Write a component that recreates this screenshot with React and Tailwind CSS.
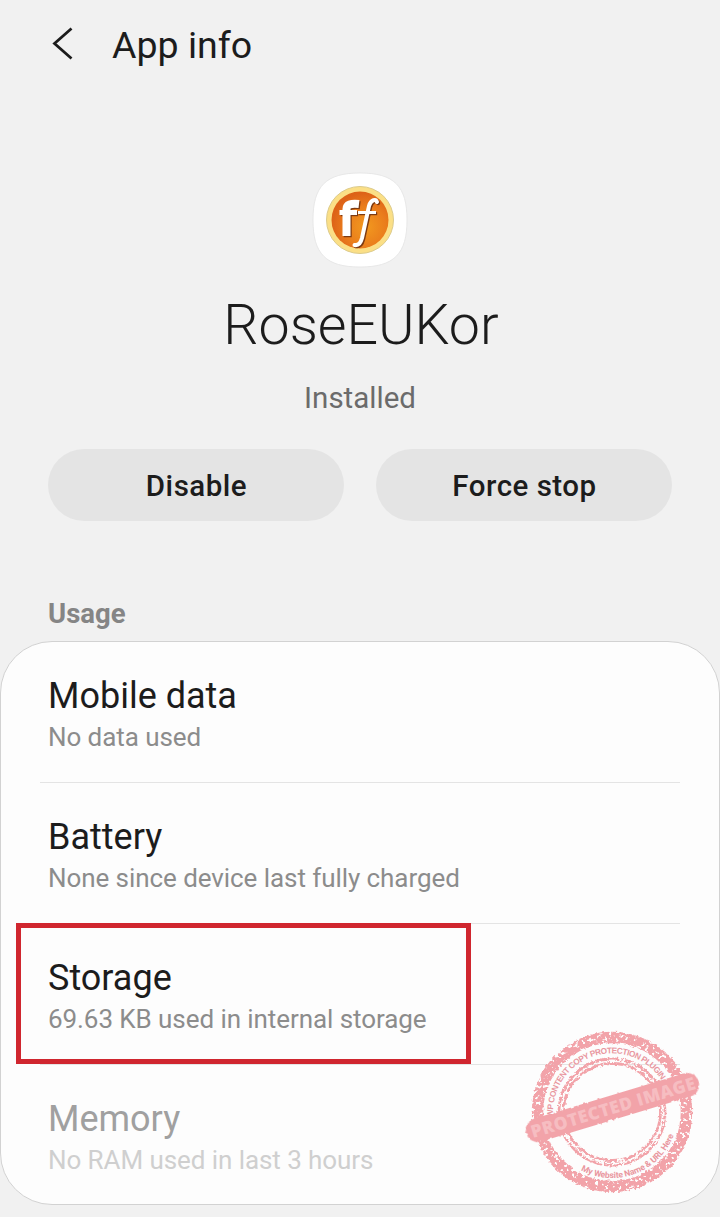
import React from 'react';

const usageItems = [
    { title: 'Mobile data', summary: 'No data used' },
    { title: 'Battery', summary: 'None since device last fully charged' },
    { title: 'Storage', summary: '69.63 KB used in internal storage', highlighted: true },
    { title: 'Memory', summary: 'No RAM used in last 3 hours', disabled: true },
];

const BackIcon = () => (
    <svg width="24" height="36" viewBox="0 0 24 36" fill="none" stroke="#1c1c1c" strokeWidth="2.8">
        <path d="M20.5 1.5L3.5 16.5L20.5 31.5" />
    </svg>
);

const AppIcon = () => (
    <svg width="96" height="96" viewBox="0 0 96 96">
        <defs>
            <radialGradient id="orange" cx="60%" cy="62%" r="60%">
                <stop offset="0" stopColor="#f2991f" />
                <stop offset="0.6" stopColor="#ea7d1c" />
                <stop offset="1" stopColor="#dd6218" />
            </radialGradient>
        </defs>
        <path
            d="M48 1C82 1 95 14 95 48S82 95 48 95S1 82 1 48S14 1 48 1Z"
            fill="#fff"
            stroke="#e3e3e3"
            strokeWidth="0.8"
        />
        <circle cx="48" cy="48" r="33.5" fill="#fbdf86" stroke="#dccb8c" strokeWidth="1" />
        <circle cx="48" cy="48" r="28.5" fill="url(#orange)" />
        <g fill="none">
            <g stroke="#7c3a12" transform="translate(1.2 1.2)">
                <path d="M34.5 64V37Q34.5 30.5 47 32" strokeWidth="8" />
                <path d="M27.5 40.5H45" strokeWidth="5" />
                <path d="M65 30C64 27 59 27 57 34L50 66Q48 74 42.5 73" strokeWidth="4" strokeLinecap="round" />
                <path d="M46 40.5H64" strokeWidth="3" />
            </g>
            <g stroke="#fff">
                <path d="M34.5 64V37Q34.5 30.5 47 32" strokeWidth="8" />
                <path d="M27.5 40.5H45" strokeWidth="5" />
                <path d="M65 30C64 27 59 27 57 34L50 66Q48 74 42.5 73" strokeWidth="4" strokeLinecap="round" />
                <path d="M46 40.5H64" strokeWidth="3" />
            </g>
        </g>
    </svg>
);

// Rubber stamp, drawn around the centre of its rings
const Stamp = () => (
    <svg className="absolute right-[17px] bottom-[6px]" width="180" height="172" viewBox="-90 -86 180 172">
        <defs>
            <filter id="worn" x="-10%" y="-10%" width="120%" height="120%">
                <feTurbulence type="fractalNoise" baseFrequency="0.3" numOctaves="2" seed="11" result="noise" />
                <feColorMatrix in="noise" type="matrix" values="0 0 0 0 0  0 0 0 0 0  0 0 0 0 0  0 0 9 0 -2.8" result="holes" />
                <feDisplacementMap in="SourceGraphic" in2="noise" scale="4" xChannelSelector="R" yChannelSelector="G" result="rough" />
                <feComposite in="rough" in2="holes" operator="in" />
            </filter>
            <filter id="rough" x="-10%" y="-20%" width="120%" height="140%">
                <feTurbulence type="fractalNoise" baseFrequency="0.3" numOctaves="2" seed="3" />
                <feDisplacementMap in="SourceGraphic" scale="3" xChannelSelector="R" yChannelSelector="G" />
            </filter>
            <path id="topArc" d="M-58.8 5.1A59 59 0 1 1 59 0" />
            <path id="bottomArc" d="M-31 58.3A66 66 0 0 0 66 0" />
        </defs>
        <g fill="none" stroke="#f2a3a9" filter="url(#worn)">
            <circle r="74.5" strokeWidth="11.5" />
            <circle r="53" strokeWidth="2.8" />
            <circle r="48.5" strokeWidth="2.8" />
        </g>
        <g fill="#e9979f" fontFamily="'Liberation Sans', Arial, sans-serif" fontWeight="700">
            <text fontSize="8.3" textLength="156">
                <textPath href="#topArc" textLength="156">WP CONTENT COPY PROTECTION PLUGIN</textPath>
            </text>
            <text fontSize="8.5" textLength="112" fontFamily="Roboto, sans-serif">
                <textPath href="#bottomArc" textLength="112">My Website Name &amp; URL Here</textPath>
            </text>
        </g>
        <g transform="translate(0.5 -4.5) rotate(-16.8)">
            <rect x="-90" y="-12" width="180" height="24" rx="12" fill="#f2a3a9" filter="url(#rough)" />
            <text
                x="-85"
                y="6.3"
                textLength="171"
                fill="#f6bdc1"
                fontSize="17.5"
                fontWeight="800"
                fontFamily="'Open Sans', 'Liberation Sans', sans-serif"
            >
                PROTECTED IMAGE
            </text>
        </g>
    </svg>
);

const UsageRow = ({ title, summary, highlighted, disabled }) => (
    <div className="group relative h-[141px] px-[39px]">
        <div className="h-full border-b border-[#e4e4e4] px-2 pt-8 group-last:border-b-0">
            <div className={`text-[36px] leading-[44px] ${disabled ? 'text-[#a0a0a0]' : 'text-[#1c1c1c]'}`}>
                {title}
            </div>
            <div
                className={`text-[26px] leading-[38px] tracking-[-0.07px] ${disabled ? 'text-[#cfcfcf]' : 'text-[#8c8c8c]'}`}
            >
                {summary}
            </div>
        </div>
        {highlighted && (
            <div className="absolute left-[15px] -top-px h-[141px] w-[455px] border-5 border-[#d0262f]"></div>
        )}
    </div>
);

const App = () => {
    return (
        <div className="h-[1217px] w-[720px] overflow-hidden bg-[#f1f1f1] font-['Roboto',sans-serif] text-[#1c1c1c]">
            <header className="flex h-[90px] items-center pl-[51px]">
                <BackIcon />
                <h1 className="ml-[37px] pb-px text-[37.5px] leading-[44px]">App info</h1>
            </header>

            <section className="flex flex-col items-center pt-[82px]">
                <AppIcon />
                <h2 className="mt-6 pl-0.5 text-[55.5px] leading-[68px] font-light">RoseEUKor</h2>
                <p className="mt-[18px] text-[29.5px] leading-[40px] text-[#6b6b6b]">Installed</p>
            </section>

            <div className="mt-[31px] grid grid-cols-2 gap-8 px-12">
                <button className="h-[72px] rounded-full bg-[#e4e4e4] pt-[3px] pl-px text-[29.5px] font-medium tracking-[0.5px]">
                    Disable
                </button>
                <button className="h-[72px] rounded-full bg-[#e4e4e4] pt-[3px] pl-px text-[29.5px] font-medium tracking-[0.5px]">
                    Force stop
                </button>
            </div>

            <h3 className="mt-[75px] px-12 text-[27.5px] leading-[36px] font-bold text-[#858585]">Usage</h3>

            <div className="relative mt-[9px] h-[564px] rounded-[52px] border border-[#d2d2d2] bg-[#fdfdfd]">
                <div>
                    {usageItems.map((item) => (
                        <UsageRow key={item.title} {...item} />
                    ))}
                </div>
                <Stamp />
            </div>
        </div>
    );
};

export default App;
